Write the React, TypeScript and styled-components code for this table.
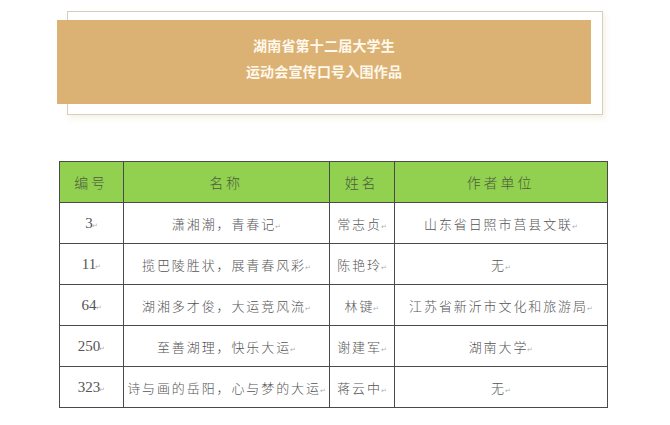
import styled, { createGlobalStyle } from 'styled-components';

const GlobalStyle = createGlobalStyle`
  html, body {
    margin: 0;
    padding: 0;
    background: #fff;
  }
  body {
    width: 670px;
    height: 425px;
    overflow: hidden;
    font-family: "Noto Sans CJK SC", sans-serif;
  }
`;

const Page = styled.div`
  padding-top: 11px;
`;

const Frame = styled.div`
  margin-left: 67px;
  width: 534px;
  height: 102px;
  border: 1px solid #d6cfbf;
  box-shadow: 2px 3px 6px rgba(220, 205, 170, 0.3);
`;

const Banner = styled.div`
  margin: 8px 0 0 -11px;
  width: 534px;
  height: 84px;
  background: #dcb274;
  display: flex;
  flex-direction: column;
  align-items: center;
  justify-content: center;
  gap: 8px;
  padding-bottom: 8px;
  box-sizing: border-box;

  p {
    margin: 0;
    color: #fff8ec;
    font-size: 14px;
    font-weight: 700;
    line-height: 18px;
    letter-spacing: 0.2px;
  }
`;

const Table = styled.table`
  margin: 46px 0 0 59px;
  width: 545px;
  border-collapse: collapse;
  border: 1.5px solid #4a4a4a;
  table-layout: fixed;
`;

const Th = styled.th<{ w: number }>`
  width: ${({ w }) => w}px;
  height: 40px;
  padding: 0;
  background: #92d050;
  border: 1px solid #4a4a4a;
  color: #4c5c3c;
  font-family: "Noto Sans CJK SC", sans-serif;
  font-weight: 300;
  font-size: 14px;
  letter-spacing: 3px;
  text-align: center;
`;

const Td = styled.td<{ num?: boolean }>`
  height: 40px;
  padding: 0;
  border: 1px solid #4a4a4a;
  color: #555;
  font-family: ${({ num }) =>
    num ? '"Liberation Serif", serif' : '"Noto Sans CJK SC", sans-serif'};
  font-weight: 300;
  font-size: ${({ num }) => (num ? '15px' : '13px')};
  letter-spacing: ${({ num }) => (num ? '0' : '1.9px')};
  text-align: center;
  vertical-align: middle;
  white-space: nowrap;
`;

const Mark = styled.span`
  font-family: "Noto Sans CJK SC", sans-serif;
  font-size: 7px;
  color: #b0b0b0;
  letter-spacing: 0;
  margin-left: -1px;
`;

type Row = { no: string; title: string; name: string; unit: string };

const rows: Row[] = [
  { no: '3', title: '潇湘潮，青春记', name: '常志贞', unit: '山东省日照市莒县文联' },
  { no: '11', title: '揽巴陵胜状，展青春风彩', name: '陈艳玲', unit: '无' },
  { no: '64', title: '湖湘多才俊，大运竞风流', name: '林键', unit: '江苏省新沂市文化和旅游局' },
  { no: '250', title: '至善湖理，快乐大运', name: '谢建军', unit: '湖南大学' },
  { no: '323', title: '诗与画的岳阳，心与梦的大运', name: '蒋云中', unit: '无' },
];

const headers: [string, number][] = [
  ['编号', 63],
  ['名称', 205],
  ['姓名', 64],
  ['作者单位', 212],
];

export default function App() {
  return (
    <Page>
      <GlobalStyle />
      <Frame>
        <Banner>
          <p>湖南省第十二届大学生</p>
          <p>运动会宣传口号入围作品</p>
        </Banner>
      </Frame>
      <Table>
        <thead>
          <tr>
            {headers.map(([h, w]) => (
              <Th key={h} w={w}>
                {h}
                <Mark>.</Mark>
              </Th>
            ))}
          </tr>
        </thead>
        <tbody>
          {rows.map((r) => (
            <tr key={r.no}>
              <Td num>
                {r.no}
                <Mark>↵</Mark>
              </Td>
              <Td>
                {r.title}
                <Mark>↵</Mark>
              </Td>
              <Td>
                {r.name}
                <Mark>↵</Mark>
              </Td>
              <Td>
                {r.unit}
                <Mark>↵</Mark>
              </Td>
            </tr>
          ))}
        </tbody>
      </Table>
    </Page>
  );
}
